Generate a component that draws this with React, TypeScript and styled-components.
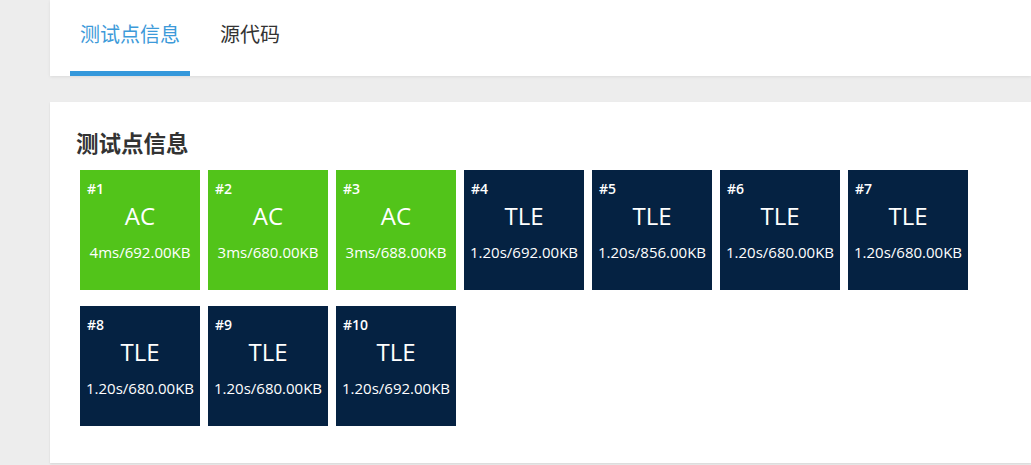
import React from "react";
import styled, { createGlobalStyle } from "styled-components";

const Global = createGlobalStyle`
  html, body { margin: 0; padding: 0; background: #ededed; }
  body { font-family: "Open Sans", "Noto Sans CJK SC", sans-serif; overflow: hidden; }
`;

const Page = styled.div`
  padding-left: 50px;
  display: flex;
  flex-direction: column;
  height: 465px;
`;

const TabBar = styled.div`
  background: #fff;
  height: 76px;
  display: flex;
  padding-left: 20px;
  box-shadow: 0 1px 3px rgba(0, 0, 0, 0.08);
`;

const Tab = styled.div<{ $active?: boolean }>`
  box-sizing: border-box;
  height: 76px;
  padding: 22px 10px 0;
  margin-right: 20px;
  font-size: 20px;
  line-height: 24px;
  font-family: "Noto Sans CJK SC", sans-serif;
  color: ${(p) => (p.$active ? "#3d9ad9" : "#333")};
  border-bottom: 5px solid ${(p) => (p.$active ? "#3498db" : "transparent")};
`;

const Card = styled.div`
  margin-top: 26px;
  background: #fff;
  height: 361px;
  box-sizing: border-box;
  padding: 25px 26px 0;
  box-shadow: 0 1px 2px rgba(0, 0, 0, 0.1);
`;

const Heading = styled.h2`
  margin: 0;
  font-size: 22.5px;
  line-height: 30px;
  font-weight: 700;
  color: #333;
  font-family: "Noto Sans CJK SC", sans-serif;
`;

const Grid = styled.div`
  display: flex;
  flex-wrap: wrap;
  width: 900px;
  margin-top: 13px;
  row-gap: 16px;
`;

const Tile = styled.div<{ $ok: boolean }>`
  width: 120px;
  height: 120px;
  margin: 0 4px;
  box-sizing: border-box;
  padding: 10px 7px 0;
  background: ${(p) => (p.$ok ? "#52c41a" : "#052242")};
  color: #fff;
  display: flex;
  flex-direction: column;
`;

const Id = styled.div`
  font-size: 14px;
  line-height: 18px;
  font-weight: 600;
`;

const Status = styled.div`
  margin-top: 2px;
  font-size: 24px;
  line-height: 32px;
  text-align: center;
`;

const Stat = styled.div`
  margin-top: 10px;
  margin-left: -6px;
  margin-right: -6px;
  font-size: 15px;
  line-height: 20px;
  text-align: center;
  white-space: nowrap;
`;

const cases = [
  { s: "AC", t: "4ms/692.00KB" },
  { s: "AC", t: "3ms/680.00KB" },
  { s: "AC", t: "3ms/688.00KB" },
  { s: "TLE", t: "1.20s/692.00KB" },
  { s: "TLE", t: "1.20s/856.00KB" },
  { s: "TLE", t: "1.20s/680.00KB" },
  { s: "TLE", t: "1.20s/680.00KB" },
  { s: "TLE", t: "1.20s/680.00KB" },
  { s: "TLE", t: "1.20s/680.00KB" },
  { s: "TLE", t: "1.20s/692.00KB" },
];

export default function App() {
  return (
    <>
      <Global />
      <Page>
        <TabBar>
          <Tab $active>测试点信息</Tab>
          <Tab>源代码</Tab>
        </TabBar>
        <Card>
          <Heading>测试点信息</Heading>
          <Grid>
            {cases.map((c, i) => (
              <Tile key={i} $ok={c.s === "AC"}>
                <Id>#{i + 1}</Id>
                <Status>{c.s}</Status>
                <Stat>{c.t}</Stat>
              </Tile>
            ))}
          </Grid>
        </Card>
      </Page>
    </>
  );
}
